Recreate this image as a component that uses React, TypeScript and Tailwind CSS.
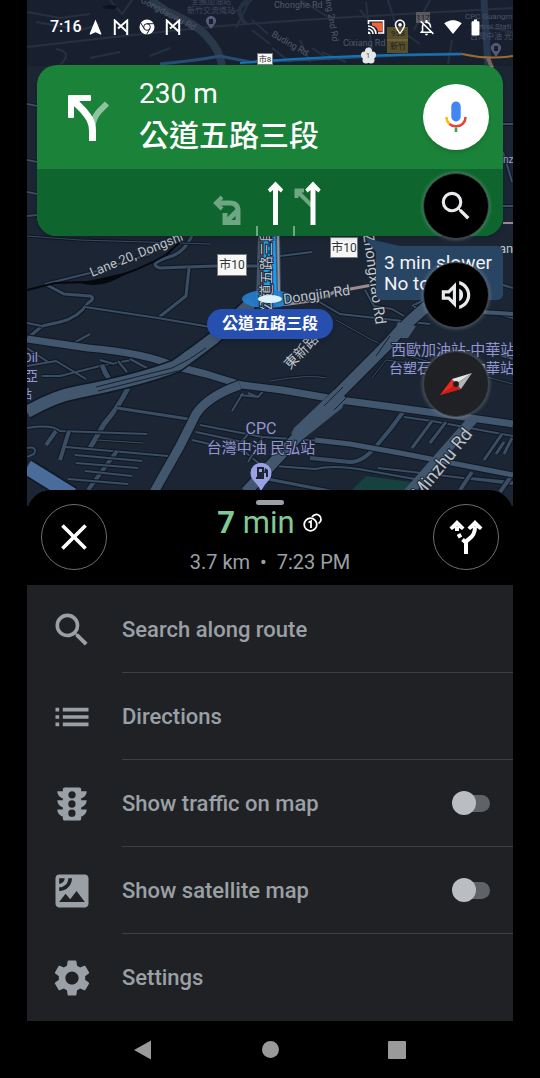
import type { ReactNode } from "react";
import {
  MdBatteryFull,
  MdClose,
  MdList,
  MdNavigation,
  MdOutlineLocationOn,
  MdOutlineNotificationsOff,
  MdOutlineVolumeUp,
  MdSatellite,
  MdSearch,
  MdSettings,
  MdSignalWifi4Bar,
  MdTraffic,
} from "react-icons/md";

type Road = [string, number];

const minorRoads: Road[] = [
  ["M45 284 L64 294 L90 296 Q96 298 88 303 Q78 318 60 322 L42 326 L28 338", 3],
  ["M27 323 L42 326", 2],
  ["M45 284 L90 273 L150 254", 2],
  ["M192 236 Q184 252 172 256 Q146 264 160 268 L215 266 L260 266", 3],
  ["M189 268 L186 296 L158 318", 3],
  ["M85 307 L158 318 L222 329", 2],
  ["M90 334 L70 345", 2],
  ["M27 348 L48 362 M27 366 L56 361 L86 379 M42 376 L60 376 L104 365 L132 360", 2],
  ["M102 365 Q108 382 119 388", 5],
  ["M118 361 L127 372 M130 359 L147 368 M100 360 L114 364", 2],
  ["M128 388 Q118 408 104 424 L90 448", 5],
  ["M117 408 L195 420", 3],
  ["M27 428 Q52 424 60 431 L147 434", 2],
  ["M69 431 L60 460 M56 431 L46 445", 4],
  ["M97 440 L143 443", 1],
  ["M66 447 L168 456", 2],
  ["M117 451 L88 490", 4],
  ["M75 455 L142 461 M76 463 L138 468 M85 471 L132 476 M68 479 L128 484", 2],
  ["M27 448 Q38 446 34 454 L27 457", 2],
  ["M240 395 L258 397 L248 393 M258 397 L266 388 M243 393 L232 411", 2],
  ["M200 425 L262 437 L340 442 M196 432 L252 444 M192 440 L245 452 L262 466", 2],
  ["M248 434 L238 446 M262 438 L248 462", 2],
  ["M403 412 Q392 428 378 444 Q364 462 350 462 L310 458", 4],
  ["M404 417 L432 421 L513 436", 2],
  ["M432 421 L412 448 M446 422 L430 443", 3],
  ["M502 434 L484 460 M504 442 L496 454 M512 438 L504 454", 3],
  ["M275 466 L315 469 Q335 464 370 471 L420 480", 2],
  ["M378 468 L430 474 L513 484 M470 478 L513 482", 2],
  ["M472 472 L460 490 M512 475 L500 492", 4],
  ["M262 478 L330 491", 3],
  ["M316 300 L340 314 L430 324", 2],
  ["M278 336 L312 315", 2],
  ["M365 290 L374 306 L392 309 L404 316", 2],
  ["M412 306 L432 296 L513 318", 2],
  ["M270 381 Q310 374 326 378", 1],
  ["M336 320 L372 340 L408 356 L513 384", 1],
  ["M372 378 L386 360 L430 366 L468 372", 1],
  ["M27 236 L80 240 L210 244", 1],
  ["M27 104 L37 106 M27 160 L37 162 M27 192 L37 194 M27 216 L37 215", 2],
  ["M503 124 L513 124 M503 152 L508 168 L512 182 M503 206 L513 206", 2],
  ["M470 262 L513 250 M440 266 L513 288 M280 256 L312 252", 2],
];

const majorRoads: Road[] = [
  ["M27 339 L88 348 Q145 353 174 366 L206 374 L242 385 L282 390 L340 400 L400 408 L513 424", 7],
  ["M240 385 Q208 396 196 414 L180 446 L154 492", 9],
  ["M315 440 L350 444 L400 453 L513 475", 5],
  ["M500 354 L513 358 M414 308 L513 314", 4],
];

const duskLines = [
  "M27 47 Q120 36 200 28 T513 8",
  "M27 12 L60 18 L90 14 M56 49 Q74 52 60 65 M120 52 L90 58 M150 56 L170 48",
  "M110 0 L122 14 L132 0 M36 22 L82 30 L100 24",
  "M236 28 L250 0 M252 20 L268 34 M232 14 L252 0 M252 30 L270 44",
  "M272 48 L290 62 M300 40 L310 62 M312 48 L330 60 M322 52 L346 62",
  "M388 0 L396 26 M300 0 L330 18 M366 2 L372 52 M430 0 L414 30",
  "M452 40 L448 64 M470 24 L513 32 M420 44 L400 30 M360 10 L376 28",
];

function Roads({ roads, color }: { roads: Road[]; color: string }) {
  return (
    <>
      {roads.map(([d, width]) => (
        <g key={d} fill="none" strokeLinejoin="round">
          <path d={d} stroke="#0f1925" strokeWidth={width + 2} />
          <path d={d} stroke={color} strokeWidth={width} />
        </g>
      ))}
    </>
  );
}

function MapCanvas() {
  return (
    <svg
      viewBox="27 0 486 506"
      preserveAspectRatio="xMidYMin slice"
      className="absolute inset-0 h-full w-full font-[Roboto,'Noto_Sans_CJK_TC',sans-serif]"
      aria-label="Map"
      role="img"
    >
      <rect x="27" width="486" height="506" fill="#1b2534" />
      <path d="M366 476 L411 482 L404 492 L350 492 Z" fill="#17413f" />
      <Roads roads={minorRoads} color="#3a4d63" />
      <path d="M27 290 L55 283 Q90 282 104 281 Q140 270 166 255 L180 242" fill="none" stroke="#05080d" strokeWidth="2" />
      <path d="M80 283 Q104 290 128 272" fill="#05080d" />
      <Roads roads={majorRoads} color="#42566d" />
      <path d="M27 412 Q55 396 78 392 Q140 380 176 366 Q196 352 214 338 L252 302" fill="none" stroke="#0f1925" strokeWidth="15" />
      <path d="M27 412 Q55 396 78 392 Q140 380 176 366 Q196 352 214 338 L252 302" fill="none" stroke="#42566d" strokeWidth="12" />
      <path d="M180 362 Q186 348 204 350" fill="none" stroke="#42566d" strokeWidth="4" />
      <path d="M96 387 L172 368 Q190 360 206 348 M98 391 L182 370 L212 350" fill="none" stroke="#15202d" />
      <path d="M440 296 Q408 320 386 346 L338 394 L300 434 L246 492" fill="none" stroke="#0f1925" strokeWidth="13" />
      <path d="M440 296 Q408 320 386 346 L338 394 L300 434 L246 492" fill="none" stroke="#42566d" strokeWidth="11" />
      <path d="M338 390 L346 398 L342 408 L302 440 L291 434 L294 428 L334 390 Z M398 322 L416 326 L408 338 L392 338 Z" fill="#42566d" />
      <path d="M324 406 L343 387 M334 410 L350 394 M376 356 L390 336 M372 352 L388 330" fill="none" stroke="#15202d" />
      <path d="M474 418 L402 500" stroke="#42566d" strokeWidth="10" />
      <path d="M27 467 L72 495" stroke="#0f1925" strokeWidth="18" />
      <path d="M27 467 L72 495" stroke="#496c9b" strokeWidth="15" />
      <path d="M276 305 Q320 302 334 292 L372 285" fill="none" stroke="#9b8b91" strokeWidth="3" />
      <path d="M503 223 L513 223" stroke="#9b8b91" strokeWidth="2" />

      <path d="M258 236 L280 236 L281 300 L256 300 Z" fill="#43546a" />
      <path d="M264 236 L275 236 L277 300 L264 300 Z" fill="#12a0ec" />
      <path d="M270 236 V290" stroke="#0957b0" strokeDasharray="4 3" strokeWidth="4" />
      <path d="M278 236 L279 298" stroke="#8d95a5" strokeWidth="2" />

      <g fill="none" stroke="#2c3a4c" strokeWidth="2">
        {duskLines.map((d) => (
          <path key={d} d={d} />
        ))}
        <path d="M150 0 L168 12 Q200 26 208 38 Q220 50 222 66" stroke="#344459" strokeWidth="8" />
        <path d="M484 0 L488 66" stroke="#2f435d" strokeWidth="7" />
        <path d="M248 0 Q232 10 246 24" strokeWidth="4" />
        <path d="M488 58 L492 68" stroke="#9b7d74" strokeWidth="4" />
      </g>
      <path d="M160 64 Q200 60 220 56 L250 62 L400 55 L462 54" fill="none" stroke="#2b5f92" strokeWidth="3" />
      <path d="M240 63 Q320 56 400 55 L462 54" fill="none" stroke="#1993e6" strokeWidth="2" />
      <path d="M462 54 Q488 60 513 56" fill="none" stroke="#c88a36" strokeWidth="2" />
      <ellipse cx="110" cy="7" rx="7" ry="2" fill="#0e131b" />
      <rect x="387" y="27" width="21" height="26" fill="#70652f" />
      <path d="M387 40 h21" stroke="#a49451" />
      <rect x="416" y="12" width="14" height="11" fill="#6f7276" />
      <g textAnchor="middle" fontSize="8" fill="#23241f">
        <text x="398" y="36">95B</text>
        <text x="398" y="49">新竹</text>
        <text x="423" y="20">117</text>
      </g>

      <g fill="#667080" fontSize="8">
        <text x="274" y="8" fontSize="9">
          Chonghe Rd
        </text>
        <text x="343" y="46" fontSize="9">
          Cixiang Rd
        </text>
        <text transform="translate(271 36) rotate(30)" fontSize="9">
          Buding Rd
        </text>
        <text transform="translate(325 -2) rotate(80)" fontSize="9">
          jing 2nd Rd
        </text>
        <text transform="translate(140 2) rotate(28)" fontSize="9">
          Gongdaowu Rd
        </text>
        <g fill="#535a78" textAnchor="middle">
          <text x="211" y="4">全國加油站</text>
          <text x="211" y="13">新竹交流道站</text>
        </g>
        <g fill="#5f6783">
          <text x="465" y="19">CPC Guangm</text>
          <text x="472" y="29">Petrol Stati</text>
          <text x="470" y="39">台灣中油 光明</text>
        </g>
      </g>
      <path d="M211 29 l-4 -5 a5 5 0 1 1 8 0z M496 57 l-4 -6 a5 5 0 1 1 8 0z" fill="#6b7196" />
      <path d="M209 19h4v5h-4z M494 46h4v5h-4z" fill="#1d2432" />

      <ellipse cx="268" cy="299" rx="26" ry="9" fill="#2680cf" opacity="0.9" />
      <g fill="#bfc3c8" stroke="#1b2534" strokeWidth="2" className="[paint-order:stroke]" fontSize="13">
        <text transform="translate(92 277) rotate(-22)">Lane 20, Dongshi</text>
        <text transform="translate(284 304) rotate(-8)" fontSize="14">
          Dongjin Rd
        </text>
        <text transform="translate(363 234) rotate(82)" fontSize="15">
          Zhongxiao Rd
        </text>
        <text transform="translate(290 370) rotate(-46)" fontSize="14">
          東新路
        </text>
        <text transform="translate(420 500) rotate(-51)" fontSize="18">
          Minzhu Rd
        </text>
        <text transform="translate(271 312) rotate(-90)" fontSize="14">
          公道五路三段
        </text>
        <text x="503" y="163" fontSize="10" fill="#9ea4c8">
          nz
        </text>
        <text x="499" y="253">an</text>
      </g>
      <ellipse cx="270" cy="299" rx="12" ry="4" fill="#dcf2fd" />
      <g fill="#9496d2" stroke="#1b2534" strokeWidth="2" className="[paint-order:stroke]" fontSize="14">
        <text x="38" y="362" textAnchor="end" fontSize="13">
          Oil
        </text>
        <text x="38" y="381" textAnchor="end">
          亞
        </text>
        <text x="32" y="399" textAnchor="end" fontSize="12">
          站
        </text>
        <text x="391" y="355" fontSize="15">
          西歐加油站-中華站
        </text>
        <text x="389" y="373">台塑石油</text>
        <text x="472" y="373">中華站</text>
        <text x="261" y="434" textAnchor="middle" fontSize="16">
          CPC
        </text>
        <text x="261" y="453" textAnchor="middle" fontSize="15">
          台灣中油 民弘站
        </text>
      </g>
      <path d="M261 491 Q258 485 253 480 A10.500 10.500 0 1 1 269 480 Q264 485 261 491Z" fill="#9aa0e6" />
      <path d="M257 467h7v12h-8v-2h1z M265 468l3 2v7h-2v-4h-2" fill="#1b2534" />
      <path d="M259 469h3v3h-3z" fill="#9aa0e6" />

      <path d="M365 238 L400 246 L384 262Z" fill="#294564" />
      <rect x="27" width="486" height="66" fill="#11151f" opacity="0.25" />
      <g fill="#e4e6e8">
        <circle cx="368.500" cy="51" r="3.500" />
        <circle cx="364.500" cy="55" r="3.500" />
        <circle cx="372.500" cy="55" r="3.500" />
        <circle cx="366" cy="60" r="3.500" />
        <circle cx="371" cy="60" r="3.500" />
        <circle cx="368.500" cy="56" r="3" />
      </g>
      <text x="368" y="58" textAnchor="middle" fontSize="7" fill="#444">
        1
      </text>
    </svg>
  );
}

function Shield({ children, className }: { children: ReactNode; className: string }) {
  return (
    <span className={`absolute grid place-items-center border border-[#777b80] bg-[#f7f7f7] text-[#333] ${className}`}>
      {children}
    </span>
  );
}

function MailGlyph() {
  return (
    <svg viewBox="0 0 16 16" className="size-4" aria-hidden="true">
      <path d="M1.800 16 V1.500 L14.200 13 M14.200 16 V1.500 L5 9.500" fill="none" stroke="#fff" strokeWidth="2" />
    </svg>
  );
}

function StatusBar() {
  return (
    <div className="relative flex h-[54px] items-center justify-between pr-8 pl-[23px] text-white">
      <div className="flex items-center gap-[10px]">
        <time className="text-base font-medium">7:16</time>
        <MdNavigation className="-mr-0.5 -ml-1.5 size-[19px]" aria-hidden="true" />
        <MailGlyph />
        <svg viewBox="0 0 16 16" className="size-4" aria-hidden="true">
          <circle cx="8" cy="8" r="7.500" fill="#fff" />
          <g fill="none" stroke="#1b2230">
            <circle cx="8" cy="8" r="3.300" />
            <path d="M8 4.700 H15 M5.100 9.700 L1.800 4 M10.900 9.700 L7.600 15.500" />
          </g>
        </svg>
        <MailGlyph />
      </div>
      <div className="flex items-center gap-2">
        <svg viewBox="0 0 18 16" className="h-4 w-[18px]" aria-hidden="true">
          <path d="M5 3.500 H15.500 V12.500 H11 Q10 7 5 6.500Z" fill="#f3623a" />
          <path d="M1.500 5 V1.800 H16.500 V14 H11" fill="none" stroke="#fff" strokeWidth="1.600" />
          <path d="M1 7 A8 8 0 0 1 9 15 M1 10 A5 5 0 0 1 6 15" fill="none" stroke="#fff" strokeWidth="1.600" />
          <path d="M1 12.500 A2.500 2.500 0 0 1 3.500 15 H1Z" fill="#fff" />
        </svg>
        <MdOutlineLocationOn className="-ml-0.5 size-[18px]" aria-hidden="true" />
        <MdOutlineNotificationsOff className="size-[19px]" aria-hidden="true" />
        <MdSignalWifi4Bar className="size-[18px]" aria-hidden="true" />
        <MdBatteryFull className="-mx-1 size-[19px]" aria-hidden="true" />
      </div>
    </div>
  );
}

function TurnIcon() {
  return (
    <svg viewBox="0 0 46 52" className="h-[52px] w-[46px] shrink-0" aria-hidden="true">
      <path d="M41 12.500 L33 20.500 Q26 28 26 41" fill="none" stroke="#8fc39d" strokeWidth="6" />
      <path d="M26.500 50 V40 C26.500 30 22 25 17 19 L8 10" fill="none" stroke="#fff" strokeWidth="7" />
      <path d="M3 4 H24 Q25 4 25 5 V9 Q25 10 24 10 H14 L8 16 V26 Q8 27 7 27 H3 Q2 27 2 26 V5 Q2 4 3 4Z" fill="#fff" />
    </svg>
  );
}

function LaneArrows() {
  return (
    <svg viewBox="213 169 114 67" className="h-[67px] w-[114px]" role="img" aria-label="Lane guidance">
      <g fill="none" stroke="#6ea781" strokeWidth="5">
        <path d="M218 203 H230 Q238 203 238 211 V225" />
        <path d="M222 197 L216 203 L222 209" strokeWidth="4" />
        <path d="M237 211 L226 222" />
        <path d="M225 213 V222.500 H236" />
        <path d="M312 206 L298 192 M296.500 198 V190.500 H304" strokeWidth="4" />
      </g>
      <path d="M257 226 V236 M294 226 V236" stroke="#6ea781" strokeWidth="2" />
      <g fill="#fff">
        <path d="M273 225 V190 L270 192.500 L267.800 189.500 L275.500 181.500 L283.200 189.500 L281 192.500 L278 190 V225Z" />
        <path d="M310.500 225 V190 L307.500 192.500 L305.300 189.500 L313 181.500 L320.700 189.500 L318.500 192.500 L315.500 190 V225Z" />
      </g>
    </svg>
  );
}

function Banner() {
  return (
    <header className="relative mx-[10px] mt-[11px] overflow-hidden rounded-[20px] bg-[#1b8339] text-white shadow-md">
      <div className="flex h-[104px] items-center pr-[14px] pl-[29px]">
        <TurnIcon />
        <div className="ml-[27px] flex-1">
          <p className="text-[28px] leading-[38px]">230 m</p>
          <h1 className="text-[30px] leading-[46px] font-medium">公道五路三段</h1>
        </div>
        <button aria-label="Voice search" className="grid size-[66px] shrink-0 place-items-center rounded-full bg-white shadow-md">
          <svg viewBox="0 0 24 34" className="h-[34px] w-6" aria-hidden="true">
            <rect x="7.300" y="1.500" width="9.400" height="20" rx="4.700" fill="#4285f4" />
            <path d="M2.500 17 Q2.500 21.500 5.500 24" fill="none" stroke="#fbbc04" strokeWidth="2.400" />
            <path d="M5.500 24 Q8 26.200 12 26.200 T18.500 24 Q21.500 21.500 21.500 17" fill="none" stroke="#ea4335" strokeWidth="2.400" />
            <path d="M12 27.400 V32" stroke="#34a853" strokeWidth="2.600" />
          </svg>
        </button>
      </div>
      <div className="flex justify-center bg-[#0e652d]">
        <LaneArrows />
      </div>
    </header>
  );
}

function RoundButton({ label, className, children }: { label: string; className: string; children: ReactNode }) {
  return (
    <button
      aria-label={label}
      className={`grid size-[66px] place-items-center rounded-full border border-[#3d4248] text-[#e8eaed] shadow-[0_0_4px_rgba(220,225,235,0.4)] ${className}`}
    >
      {children}
    </button>
  );
}

function MapControls() {
  return (
    <div className="absolute top-[173px] right-6 flex flex-col gap-[23px]">
      <RoundButton label="Search" className="bg-black">
        <MdSearch className="size-[38px]" />
      </RoundButton>
      <RoundButton label="Sound" className="bg-black">
        <MdOutlineVolumeUp className="size-[38px]" />
      </RoundButton>
      <RoundButton label="Compass" className="bg-[#202124]">
        <svg viewBox="0 0 34 24" className="h-6 w-[34px]" aria-hidden="true">
          <path d="M1 23 L13 7 L17 12 L22 17Z" fill="#ea2a22" />
          <path d="M1 23 L17 12 L22 17Z" fill="#c81d18" />
          <path d="M33 1 L13 7 L17 12Z" fill="#e4e4e4" />
          <path d="M33 1 L17 12 L22 17Z" fill="#b4b4b4" />
          <circle cx="17" cy="12" r="3" fill="#202124" />
        </svg>
      </RoundButton>
    </div>
  );
}

function TripSummary() {
  return (
    <section className="relative -mt-4 flex h-[95px] justify-between rounded-t-[24px] bg-black px-[14px] pt-[14px]">
      <button aria-label="Close" className="grid size-[66px] place-items-center rounded-full border border-[#6b6e72] text-white">
        <MdClose className="size-11" />
      </button>
      <div className="-mt-1 flex flex-col items-center">
        <span className="h-[5px] w-7 rounded-full bg-[#9aa0a6]" />
        <p className="flex items-center gap-2 text-[31px] leading-9 text-[#81c995]">
          <span>
            <b>7</b> min
          </span>
          <svg viewBox="0 0 20 20" className="size-5" role="img" aria-label="Tolls">
            <g fill="none" stroke="#fff" strokeWidth="1.800">
              <circle cx="7.500" cy="11.500" r="6.300" />
              <path d="M9 4 A4.800 4.800 0 1 1 15.500 10.500" />
              <path d="M5.500 9.500 L8 8.300 V15" />
            </g>
          </svg>
        </p>
        <p className="mt-[7px] text-xl leading-7 text-[#9aa0a6]">3.7 km&nbsp; •&nbsp; 7:23 PM</p>
      </div>
      <button aria-label="Alternate routes" className="grid size-[66px] place-items-center rounded-full border border-[#6b6e72] text-white">
        <svg viewBox="0 0 36 36" className="size-9" aria-hidden="true">
          <path d="M18 35 V24 Q18 22 21 20 Q27 16 27 8" fill="none" stroke="#fff" strokeWidth="4" />
          <path d="M9 8 V12 M10.500 15 L12.500 18.500 M14.500 20.500 L18 23.500" fill="none" stroke="#fff" strokeWidth="4" />
          <path d="M9 1 L16.500 8.500 L14 11 L9 7.500 L4 11 L1.500 8.500Z M27 1 L34.500 8.500 L32 11 L27 7.500 L22 11 L19.500 8.500Z" fill="#fff" />
        </svg>
      </button>
    </section>
  );
}

const rowClass = "flex w-full items-stretch text-left text-[22px] font-medium text-[#9aa0a6]";

function RowBody({ icon, last, children }: { icon: ReactNode; last?: boolean; children: ReactNode }) {
  return (
    <>
      <span className="flex w-[95px] shrink-0 items-center pl-[23px]">{icon}</span>
      <span className={`flex flex-1 items-center justify-between pr-[23px] ${last ? "" : "border-b border-[#3c4043]"}`}>
        {children}
      </span>
    </>
  );
}

function ActionRow({ icon, label, last }: { icon: ReactNode; label: string; last?: boolean }) {
  return (
    <button className={rowClass}>
      <RowBody icon={icon} last={last}>
        {label}
      </RowBody>
    </button>
  );
}

function ToggleRow({ icon, label }: { icon: ReactNode; label: string }) {
  return (
    <label className={rowClass}>
      <RowBody icon={icon}>
        {label}
        <input
          type="checkbox"
          role="switch"
          className="flex h-[17px] w-9 appearance-none items-center rounded-full bg-[#5f6368] before:-ml-0.5 before:size-6 before:shrink-0 before:rounded-full before:bg-[#babdc2] checked:before:ml-[14px]"
        />
      </RowBody>
    </label>
  );
}

export default function App() {
  return (
    <div className="min-h-screen bg-black px-[27px]">
      <main className="flex min-h-screen flex-col font-['Google_Sans',Roboto,'Noto_Sans_CJK_TC',sans-serif]">
        <section className="relative min-h-[506px] overflow-hidden">
          <MapCanvas />
          <Shield className="top-[53px] left-[230px] h-3 w-4 text-[8px]">市8</Shield>
          <Shield className="top-[254px] left-[190px] h-[22px] w-[30px] text-xs">市10</Shield>
          <Shield className="top-[237px] left-[303px] h-[21px] w-[28px] text-xs">市10</Shield>
          <div className="absolute top-[309px] left-[180px] rounded-full bg-[#274fb0] px-[15px] py-[3px] text-base font-bold text-white shadow-md">
            公道五路三段
          </div>
          <div className="absolute top-[246px] right-[10px] w-[127px] rounded-md bg-[#294564] px-2 pt-[6px] pb-[6px] text-[19px] leading-[21px] whitespace-nowrap text-[#f1f3f4]">
            3 min slower
            <br />
            No tolls
          </div>
          <StatusBar />
          <Banner />
          <MapControls />
        </section>
        <TripSummary />
        <nav aria-label="Route options" className="grid flex-1 auto-rows-fr bg-[#202124] pt-px">
          <ActionRow icon={<MdSearch className="size-11" />} label="Search along route" />
          <ActionRow icon={<MdList className="size-11" />} label="Directions" />
          <ToggleRow icon={<MdTraffic className="size-11" />} label="Show traffic on map" />
          <ToggleRow icon={<MdSatellite className="size-11" />} label="Show satellite map" />
          <ActionRow icon={<MdSettings className="size-11" />} label="Settings" last />
        </nav>
        <footer className="flex h-[57px] items-center justify-between px-[107px] text-[#9a9a9a]">
          <button aria-label="Back">
            <svg viewBox="0 0 18 20" className="h-5 w-[18px]" aria-hidden="true">
              <path d="M0 10 L17 0.500 V19.500Z" fill="currentColor" />
            </svg>
          </button>
          <button aria-label="Home" className="size-[17px] rounded-full bg-current" />
          <button aria-label="Recent apps" className="size-[18px] rounded-[1px] bg-current" />
        </footer>
      </main>
    </div>
  );
}
